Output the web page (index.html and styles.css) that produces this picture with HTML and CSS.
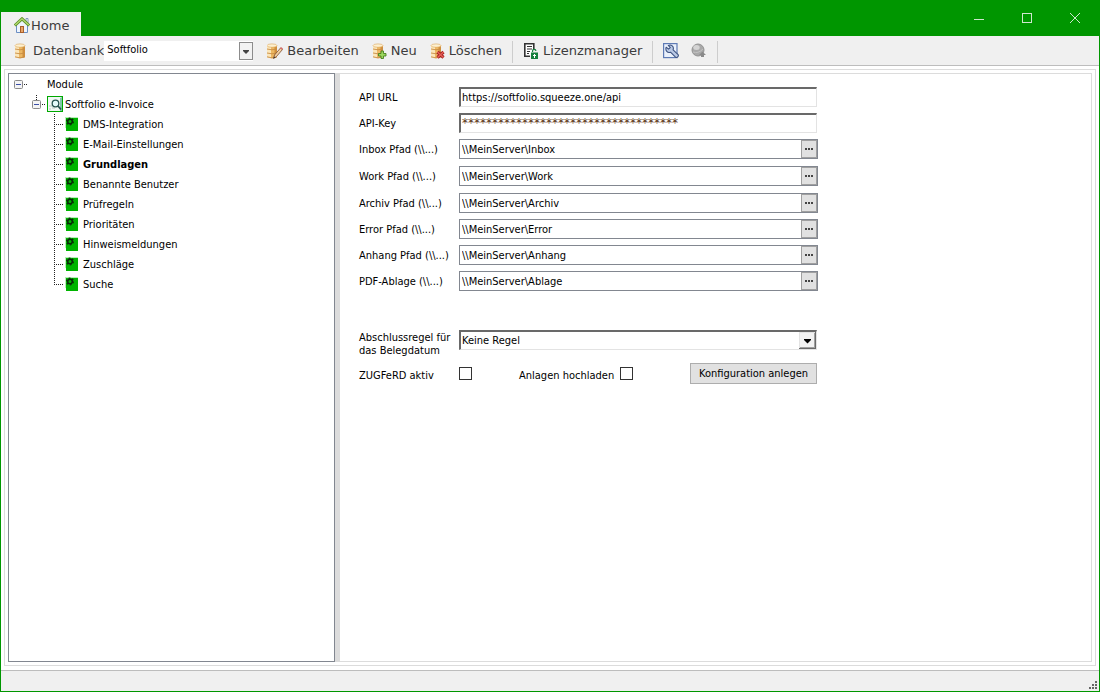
FILE: index.html
```html
<!DOCTYPE html>
<html lang="de">
<head>
<meta charset="utf-8">
<title>Softfolio e-Invoice</title>
<link rel="stylesheet" href="styles.css">
</head>
<body>
<svg class="defs" aria-hidden="true">
  <symbol id="db" viewBox="0 0 16 16">
    <path d="M2 2.500h10v11.500q-5 2.500-10 0z" fill="#edb863"/>
    <path d="M2 2.500h4v12.700q-2.500-.2-4-1.200z" fill="#fbe6ba"/>
    <path d="M9.500 2.500H12V14q-1 .7-2.500 1z" fill="#d08f3e"/>
    <ellipse cx="7" cy="2.600" rx="5" ry="1.700" fill="#fdf0d0" stroke="#dca458" stroke-width=".6"/>
    <path d="M2 6q5 1.600 10 0M2 10q5 1.600 10 0M2 13.800q5 2.200 10 0" fill="none" stroke="#c88c44" stroke-width=".9"/>
  </symbol>
  <symbol id="gear" viewBox="0 0 14 14">
    <path d="M0 0h13v14H1V11H0z" fill="#b9efb9"/>
    <path d="M1 1h12v13H1z" fill="#00b400"/>
    <circle cx="5" cy="4.500" r="3.400" fill="none" stroke="#0a280a" stroke-width="1.200" stroke-dasharray="1.780 1.780"/>
    <circle cx="5" cy="4.500" r="2.300" fill="#00b400" stroke="#0a280a" stroke-width="1.500"/>
  </symbol>
  <symbol id="branch" viewBox="0 0 11 20">
    <path d="M.5 0v20M2 10.500h7" stroke="#222" stroke-dasharray="1 1" fill="none"/>
  </symbol>
  <symbol id="branch-end" viewBox="0 0 11 20">
    <path d="M.5 0v11M2 10.500h7" stroke="#222" stroke-dasharray="1 1" fill="none"/>
  </symbol>
  <symbol id="minus" viewBox="0 0 13 20">
    <rect x=".5" y="6.500" width="8" height="8" rx="1" fill="#f4f4f4" stroke="#8a8a8a"/>
    <path d="M2 10.500h5" stroke="#3b4fa8"/>
    <path d="M10 10.500h3" stroke="#222" stroke-dasharray="1 1"/>
  </symbol>
</svg>

<div class="window">
  <header class="titlebar">
    <a class="tab" href="#home">
      <svg width="16" height="16" viewBox="0 0 16 16">
        <path d="M2.500 7.500v8h11v-8L8 2.500z" fill="#eef4fc" stroke="#6b8fc4"/>
        <path d="M12 1.500h2V6l-2-2z" fill="#fff" stroke="#8097b8"/>
        <rect x="6.500" y="9.500" width="3" height="6" fill="#e8a566" stroke="#a85f2c"/>
        <path d="M.8 8.500L8 1.800l7.200 6.700" fill="none" stroke="#5f9328" stroke-width="3"/>
        <path d="M1.200 8L8 1.700 14.800 8" fill="none" stroke="#b5dc72" stroke-width="1.200"/>
      </svg>
      <span>Home</span>
    </a>
    <div class="caption">
      <button type="button" aria-label="Minimieren"><svg width="10" height="10"><path d="M0 6.500h10" stroke="#cfe6cf"/></svg></button>
      <button type="button" aria-label="Maximieren"><svg width="10" height="10"><rect x=".5" y=".5" width="9" height="9" fill="none" stroke="#cfe6cf"/></svg></button>
      <button type="button" aria-label="Schließen"><svg width="10" height="10"><path d="M0 0l10 10M10 0L0 10" stroke="#cfe6cf"/></svg></button>
    </div>
  </header>

  <nav class="toolbar">
    <label class="tool tool-label" for="database">
      <svg width="16" height="16"><use href="#db"/></svg>Datenbank
    </label>
    <span class="combo">
      <select id="database"><option>Softfolio</option></select>
      <svg class="combo-button" width="14" height="19" viewBox="0 0 14 19"><rect x=".5" y=".5" width="13" height="17" fill="#f2f2f2" stroke="#8c8c8c"/><path d="M4 8h6v1l-3 3-3-3z" fill="#444"/></svg>
    </span>
    <button type="button" class="tool">
      <svg width="16" height="16" viewBox="0 0 16 16"><use href="#db" x="-2" width="16" height="16"/><path d="M6.500 15.500l1-3.500 6-7 2 1.500-6 7z" fill="#f3d0a2" stroke="#7c4c2c" stroke-width=".8"/><path d="M13 5.200l1-1.200 2 1.500-1 1.200z" fill="#d76d6d"/><path d="M6.500 15.500l.5-2 1.500 1z" fill="#333"/></svg>Bearbeiten
    </button>
    <button type="button" class="tool">
      <svg width="16" height="16" viewBox="0 0 16 16"><use href="#db" width="16" height="16"/><path d="M10 8h2.500v2.500H15V13h-2.500v2.500H10V13H7.500v-2.500H10z" fill="#9bd65c" stroke="#47801f" stroke-width=".9"/></svg>Neu
    </button>
    <button type="button" class="tool">
      <svg width="16" height="16" viewBox="0 0 16 16"><use href="#db" width="16" height="16"/><path d="M8.500 9l6 5.500M14.500 9l-6 5.500" stroke="#a51f1f" stroke-width="3.200"/><path d="M8.500 9l6 5.500M14.500 9l-6 5.500" stroke="#e66058" stroke-width="1.400"/></svg>Löschen
    </button>
    <span class="separator"></span>
    <button type="button" class="tool">
      <svg width="16" height="16" viewBox="0 0 16 16"><path d="M7 13.200H1.800V.8h9V6" fill="#fff" stroke="#333" stroke-width="1.600"/><path d="M4 3.500h5M4 6h5M4 8.500h3M4 10.500h2" stroke="#333"/><path d="M9.500 9V8a1.700 1.700 0 0 1 3.400 0" fill="none" stroke="#15803d" stroke-width="1.200"/><rect x="8" y="9.500" width="7" height="6.500" fill="#15803d"/><path d="M11.500 11v4M10 12.500h3" stroke="#fff"/></svg>Lizenzmanager
    </button>
    <span class="separator"></span>
    <button type="button" class="tool" aria-label="Einstellungen">
      <svg width="16" height="16" viewBox="0 0 16 16"><rect x=".6" y=".6" width="13.400" height="14" fill="#eaf1fc" stroke="#5e7bb5" stroke-width="1.200"/><path d="M3.200 4.200l2.300 2 1.800-1.600-2-2.200c3-1.200 6 1.200 4.800 4.400l5 4.800c1 1.600-1 3.600-2.600 2.600l-5-5C4.500 10.500 2 7.500 3.200 4.200z" fill="#b9c9e6" stroke="#3f5482" stroke-width="1.100" stroke-linejoin="round"/></svg>
    </button>
    <button type="button" class="tool" aria-label="Verbindung">
      <svg width="16" height="16" viewBox="0 0 16 16"><circle cx="7" cy="7" r="6" fill="#a9a9a9" stroke="#929292"/><ellipse cx="5.500" cy="4.500" rx="3.200" ry="2.500" fill="#d4d4d4"/><path d="M2 9q5 2 10-3" fill="none" stroke="#c2c2c2"/><path d="M11.500 8.500L15 12h-2v2h-3v-2H8z" fill="#8a8a8a"/></svg>
    </button>
    <span class="separator"></span>
  </nav>

  <main class="workspace">
    <div class="frame">
      <aside class="tree">
        <ul>
          <li>
            <div class="node root"><svg width="13" height="20"><use href="#minus"/></svg><span class="root-text">Module</span></div>
            <ul>
              <li>
                <div class="node product">
                  <svg width="13" height="20" viewBox="0 0 13 20"><path d="M4.500 1v5" stroke="#222" stroke-dasharray="1 1"/><use href="#minus" width="13" height="20"/></svg>
                  <svg width="16" height="16" viewBox="0 0 16 16"><rect x=".5" y=".5" width="15" height="15" fill="#f1f7f4" stroke="#00a800"/><path d="M2 13h2M5 12h3M2 10h3" stroke="#b9c7c0"/><path d="M13 2l2-1v14h-2z" fill="#7fc8a8"/><circle cx="8.500" cy="7.500" r="3.300" fill="#e4fafa" stroke="#27534f" stroke-width="1.300"/><path d="M11 10l3 3.500" stroke="#27534f" stroke-width="1.800"/></svg>
                  <span>Softfolio e-Invoice</span>
                </div>
                <ul>
                  <li class="node leaf"><svg width="11" height="20"><use href="#branch"/></svg><svg width="14" height="14"><use href="#gear"/></svg><span>DMS-Integration</span></li>
                  <li class="node leaf"><svg width="11" height="20"><use href="#branch"/></svg><svg width="14" height="14"><use href="#gear"/></svg><span>E-Mail-Einstellungen</span></li>
                  <li class="node leaf current"><svg width="11" height="20"><use href="#branch"/></svg><svg width="14" height="14"><use href="#gear"/></svg><span>Grundlagen</span></li>
                  <li class="node leaf"><svg width="11" height="20"><use href="#branch"/></svg><svg width="14" height="14"><use href="#gear"/></svg><span>Benannte Benutzer</span></li>
                  <li class="node leaf"><svg width="11" height="20"><use href="#branch"/></svg><svg width="14" height="14"><use href="#gear"/></svg><span>Prüfregeln</span></li>
                  <li class="node leaf"><svg width="11" height="20"><use href="#branch"/></svg><svg width="14" height="14"><use href="#gear"/></svg><span>Prioritäten</span></li>
                  <li class="node leaf"><svg width="11" height="20"><use href="#branch"/></svg><svg width="14" height="14"><use href="#gear"/></svg><span>Hinweismeldungen</span></li>
                  <li class="node leaf"><svg width="11" height="20"><use href="#branch"/></svg><svg width="14" height="14"><use href="#gear"/></svg><span>Zuschläge</span></li>
                  <li class="node leaf"><svg width="11" height="20"><use href="#branch-end"/></svg><svg width="14" height="14"><use href="#gear"/></svg><span>Suche</span></li>
                </ul>
              </li>
            </ul>
          </li>
        </ul>
      </aside>
      <div class="splitter"></div>
      <section class="panel">
        <form class="form">
          <div class="row"><label for="url">API URL</label><input class="sunken" id="url" type="text" value="https://softfolio.squeeze.one/api"></div>
          <div class="row"><label for="key">API-Key</label><input class="sunken key" id="key" type="text" value="************************************"></div>
          <div class="row"><label for="inbox">Inbox Pfad (\\...)</label><div class="path"><input id="inbox" type="text" value="\\MeinServer\Inbox"><button type="button" aria-label="Inbox Pfad wählen"><i></i><i></i><i></i></button></div></div>
          <div class="row apart"><label for="work">Work Pfad (\\...)</label><div class="path"><input id="work" type="text" value="\\MeinServer\Work"><button type="button" aria-label="Work Pfad wählen"><i></i><i></i><i></i></button></div></div>
          <div class="row apart"><label for="archiv">Archiv Pfad (\\...)</label><div class="path"><input id="archiv" type="text" value="\\MeinServer\Archiv"><button type="button" aria-label="Archiv Pfad wählen"><i></i><i></i><i></i></button></div></div>
          <div class="row"><label for="error">Error Pfad (\\...)</label><div class="path"><input id="error" type="text" value="\\MeinServer\Error"><button type="button" aria-label="Error Pfad wählen"><i></i><i></i><i></i></button></div></div>
          <div class="row"><label for="anhang">Anhang Pfad (\\...)</label><div class="path"><input id="anhang" type="text" value="\\MeinServer\Anhang"><button type="button" aria-label="Anhang Pfad wählen"><i></i><i></i><i></i></button></div></div>
          <div class="row"><label for="ablage">PDF-Ablage (\\...)</label><div class="path"><input id="ablage" type="text" value="\\MeinServer\Ablage"><button type="button" aria-label="PDF-Ablage wählen"><i></i><i></i><i></i></button></div></div>
          <div class="row rule">
            <label for="regel">Abschlussregel für<br>das Belegdatum</label>
            <span class="dropdown">
              <select class="sunken" id="regel"><option>Keine Regel</option></select>
              <svg class="dropdown-button" width="17" height="17" viewBox="0 0 17 17"><path d="M0 0h17v17H0z" fill="#696969"/><path d="M0 0h16v16H0z" fill="#e3e3e3"/><path d="M1 1h15v15H1z" fill="#a0a0a0"/><path d="M1 1h14v14H1z" fill="#f2f2f2"/><path d="M5 7h7v1l-3.500 3.500L5 8z" fill="#000"/></svg>
            </span>
          </div>
          <div class="row options">
            <label for="zugferd">ZUGFeRD aktiv</label>
            <input id="zugferd" type="checkbox">
            <label class="upload" for="upload">Anlagen hochladen</label>
            <input id="upload" type="checkbox">
            <button type="button" class="action">Konfiguration anlegen</button>
          </div>
        </form>
      </section>
    </div>
  </main>

  <footer class="statusbar">
    <svg width="8" height="8" viewBox="0 0 8 8"><path d="M6 0h2v2H6zM3 3h2v2H3zM6 3h2v2H6zM0 6h2v2H0zM3 6h2v2H3zM6 6h2v2H6z" fill="#666"/></svg>
  </footer>
</div>
</body>
</html>
```
FILE: styles.css
```css
* { box-sizing: border-box; }

body {
  margin: 0;
  font-family: "DejaVu Sans Condensed", "DejaVu Sans", sans-serif;
  font-size: 11px;
  line-height: 13px;
  color: #000;
}

svg { display: block; flex: none; }
.defs { position: absolute; width: 0; height: 0; }
button, input, select { font: inherit; color: inherit; margin: 0; border-radius: 0; }

.window {
  display: flex;
  flex-direction: column;
  min-height: 100vh;
  border: 1px solid #009600;
  border-top: 0;
  background: #fff;
}

/* Title bar */
.titlebar {
  display: flex;
  align-items: flex-end;
  justify-content: space-between;
  height: 36px;
  background: #009600;
}
.tab {
  display: flex;
  align-items: center;
  gap: 1px;
  height: 24px;
  padding: 2px 12px 0 13px;
  background: #f0f0f0;
  color: #3c3c3c;
  font-family: "DejaVu Sans", sans-serif;
  font-size: 13px;
  text-decoration: none;
}
.caption { display: flex; height: 36px; }
.caption button {
  display: flex;
  align-items: center;
  justify-content: center;
  width: 48px;
  padding: 0;
  border: 0;
  background: none;
}

/* Toolbar */
.toolbar {
  display: flex;
  align-items: center;
  height: 30px;
  padding-left: 12px;
  border-bottom: 1px solid #bdbdbd;
  background: #f0f0f0;
  font-family: "DejaVu Sans", sans-serif;
  font-size: 13px;
  color: #3c3c3c;
}
.tool {
  display: flex;
  align-items: center;
  gap: 4px;
  margin-right: 12px;
  padding: 0;
  border: 0;
  background: none;
  white-space: nowrap;
}
.tool-label { margin-right: 0; }
.separator {
  width: 1px;
  height: 22px;
  margin: 2px 10px 0 -2px;
  background: #cdcdcd;
}
.combo { position: relative; margin-right: 14px; }
.combo select {
  display: block;
  appearance: none;
  width: 149px;
  height: 20px;
  padding: 0 18px 2px 3px;
  border: 0;
  background: #fff;
  color: #000;
  font-family: "DejaVu Sans Condensed", "DejaVu Sans", sans-serif;
  font-size: 11px;
}
.combo-button { position: absolute; top: 1px; right: 0; pointer-events: none; }

/* Work area */
.workspace {
  display: flex;
  flex: 1;
  padding: 3px 3px 4px;
}
.frame {
  display: flex;
  flex: 1;
  padding: 3px;
  border: 1px solid #dcdcdc;
}
.tree {
  width: 327px;
  border: 1px solid #828790;
  background: #fff;
}
.tree ul { margin: 0; padding: 0; list-style: none; }
.node {
  display: flex;
  align-items: center;
  height: 20px;
  white-space: nowrap;
}
.root { padding-left: 5px; }
.root-text { margin-left: 20px; }
.product { padding-left: 23px; gap: 2px; }
.leaf { padding-left: 45px; }
.leaf span { margin-left: 4px; }
.current { font-weight: bold; }
.splitter { width: 5px; background: #dcdcdc; }
.panel {
  flex: 1;
  padding: 13px 19px;
  border: 1px solid #dcdcdc;
  border-left: 0;
}

/* Form */
.form { width: 459px; }
.row {
  display: flex;
  align-items: center;
  margin-bottom: 6px;
}
.row > label:first-child { flex: none; width: 100px; white-space: nowrap; }
.apart { margin-top: 7px; }
.sunken {
  flex: 1;
  height: 20px;
  margin-right: 1px;
  padding: 0 1px;
  border: 1px solid #e3e3e3;
  border-top: 2px solid #696969;
  border-left: 2px solid #696969;
  background: #fff;
}
.key {
  padding-bottom: 2px;
  font-family: "DejaVu Sans", sans-serif;
  font-size: 12px;
  color: #5a3210;
}
.path {
  display: flex;
  flex: 1;
  height: 20px;
  border: 1px solid #828790;
}
.path input {
  flex: 1;
  min-width: 0;
  padding: 0 2px;
  border: 0;
  background: none;
}
.path button {
  display: flex;
  align-items: center;
  justify-content: center;
  gap: 1px;
  width: 16px;
  padding: 0;
  border: 1px solid #a0a0a0;
  background: #e1e1e1;
}
.path i { width: 2px; height: 2px; background: #444; }
.rule { margin-top: 39px; align-items: flex-start; }
.rule label { padding-top: 1px; }
.dropdown { display: flex; flex: 1; position: relative; }
.dropdown select { appearance: none; }
.dropdown-button { position: absolute; top: 2px; right: 2px; pointer-events: none; }
.options { margin-top: 4px; }
.options label { padding-top: 4px; }
.options input {
  appearance: none;
  width: 13px;
  height: 13px;
  border: 1px solid #333;
  background: #fff;
}
.upload { margin: 0 6px 0 47px; white-space: nowrap; }
.action {
  width: 127px;
  height: 21px;
  margin: 0 1px 0 auto;
  padding: 0;
  border: 1px solid #adadad;
  background: #e1e1e1;
  white-space: nowrap;
}

/* Status bar */
.statusbar {
  display: flex;
  align-items: flex-end;
  justify-content: flex-end;
  height: 21px;
  padding: 2px;
  border-top: 1px solid #bdbdbd;
  background: #f0f0f0;
}
```
